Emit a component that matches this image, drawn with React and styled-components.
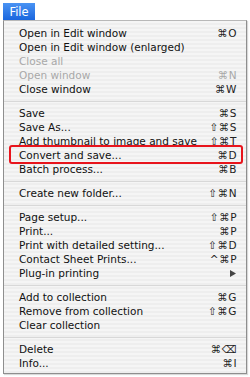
import React from "react";
import styled, { createGlobalStyle } from "styled-components";

const Global = createGlobalStyle`
  html, body { margin: 0; padding: 0; background: #ffffff; }
  body { font-family: "DejaVu Sans", "Liberation Sans", sans-serif; }
`;

const Page = styled.div`
  width: 250px;
  height: 377px;
  padding: 3px 3px 0 3px;
  box-sizing: border-box;
  display: flex;
  flex-direction: column;
`;

const MenuTitle = styled.div`
  width: 32px;
  height: 17px;
  background: linear-gradient(#4a93f3, #1a66de);
  color: #ffffff;
  font-size: 11.5px;
  display: flex;
  align-items: center;
  justify-content: center;
  box-sizing: border-box;
`;

const Menu = styled.div`
  width: 244px;
  height: 354px;
  box-sizing: border-box;
  border: 1px solid #8e8e8e;
  border-top-color: #b8b8b8;
  background: repeating-linear-gradient(#f5f5f5 0px, #f5f5f5 2px, #eeeeee 2px, #eeeeee 4px);
  padding: 5px 0 3px 0;
  display: flex;
  flex-direction: column;
  box-shadow: 1px 1px 1px rgba(0, 0, 0, 0.15);
`;

const Row = styled.div`
  position: relative;
  height: 14px;
  display: flex;
  align-items: center;
  justify-content: space-between;
  padding: 0 9px 0 15px;
  font-size: 10.5px;
  color: ${(p) => (p.$disabled ? "#a8a8a8" : "#111111")};
  white-space: nowrap;
  ${(p) =>
    p.$marked &&
    `
    &::after {
      content: "";
      position: absolute;
      left: 5px;
      right: 3px;
      top: -3px;
      bottom: -2px;
      border: 2px solid #e8141c;
      border-radius: 3px;
    }
  `}
`;

const Label = styled.span``;

const Shortcut = styled.span`
  font-size: 10.5px;
  letter-spacing: 0.5px;
  color: ${(p) => (p.$disabled ? "#a8a8a8" : "#222222")};
`;

const Separator = styled.div`
  height: 10px;
  display: flex;
  align-items: center;
  &::before {
    content: "";
    flex: 1;
    height: 1px;
    background: #d8d8d8;
  }
`;

const Arrow = styled.svg`
  width: 6px;
  height: 7px;
  margin-right: 1px;
`;

const items = [
  ["Open in Edit window", "⌘O"],
  ["Open in Edit window (enlarged)", ""],
  ["Close all", "", true],
  ["Open window", "⌘N", true],
  ["Close window", "⌘W"],
  "-",
  ["Save", "⌘S"],
  ["Save As...", "⇧⌘S"],
  ["Add thumbnail to image and save", "⇧⌘T"],
  ["Convert and save...", "⌘D", false, true],
  ["Batch process...", "⌘B"],
  "-",
  ["Create new folder...", "⇧⌘N"],
  "-",
  ["Page setup...", "⇧⌘P"],
  ["Print...", "⌘P"],
  ["Print with detailed setting...", "⇧⌘D"],
  ["Contact Sheet Prints...", "^⌘P"],
  ["Plug-in printing", "arrow"],
  "-",
  ["Add to collection", "⌘G"],
  ["Remove from collection", "⇧⌘G"],
  ["Clear collection", ""],
  "-",
  ["Delete", "⌘⌫"],
  ["Info...", "⌘I"],
];

export default function App() {
  return (
    <Page>
      <Global />
      <MenuTitle>File</MenuTitle>
      <Menu>
        {items.map((it, i) => {
          if (it === "-") return <Separator key={i} />;
          const [label, sc, dis, marked] = it;
          return (
            <Row key={i} $disabled={dis} $marked={marked}>
              <Label>{label}</Label>
              {sc === "arrow" ? (
                <Arrow viewBox="0 0 6 7">
                  <path d="M0 0 L6 3.5 L0 7 Z" fill="#444" />
                </Arrow>
              ) : (
                <Shortcut $disabled={dis}>{sc}</Shortcut>
              )}
            </Row>
          );
        })}
      </Menu>
    </Page>
  );
}
